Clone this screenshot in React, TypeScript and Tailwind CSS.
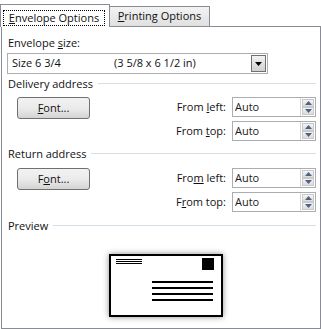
import React from "react";

const font = { fontFamily: '"Open Sans", "Noto Sans", sans-serif' };

function Spin() {
  return (
    <div className="flex h-[20px] w-[84px] border border-[#abadb3] bg-white">
      <div className="flex-1 pl-[2px] leading-[18px] text-[#1a1a1a]">Auto</div>
      <div className="flex w-[15px] flex-col border-l border-[#d5d5d5] p-[1px]">
        <div className="flex flex-1 items-center justify-center border border-[#c9c9c9] bg-gradient-to-b from-[#f4f4f4] to-[#dcdcdc]">
          <svg width="7" height="4" viewBox="0 0 7 4"><path d="M0 4 L3.5 0 L7 4Z" fill="#4d6185" /></svg>
        </div>
        <div className="flex flex-1 items-center justify-center border border-[#c9c9c9] bg-gradient-to-b from-[#f4f4f4] to-[#dcdcdc]">
          <svg width="7" height="4" viewBox="0 0 7 4"><path d="M0 0 L3.5 4 L7 0Z" fill="#4d6185" /></svg>
        </div>
      </div>
    </div>
  );
}

function FontBtn({ second }: { second?: boolean }) {
  return (
    <div className="ml-[15px] flex h-[22px] w-[73px] items-center justify-center rounded-[3px] border border-[#707070] bg-gradient-to-b from-[#f2f2f2] via-[#ebebeb] to-[#d4d4d4] text-[#111]">
      {second ? (
        <span>F<u>o</u>nt...</span>
      ) : (
        <span><u>F</u>ont...</span>
      )}
    </div>
  );
}

function Header({ children }: { children: React.ReactNode }) {
  return (
    <div className="flex h-[16px] items-center pl-[6px] pr-[4px] text-[#111]">
      <span className="leading-[16px]">{children}</span>
      <div className="ml-[5px] mt-[-1px] h-px flex-1 bg-[#d5dfe5]" />
    </div>
  );
}

function Group({ second }: { second?: boolean }) {
  return (
    <div className="flex items-start">
      <FontBtn second={second} />
      <div className="ml-auto mr-[4px] flex flex-col gap-[4px]">
        <div className="flex items-center justify-end">
          <span className="mr-[6px] text-[#111]">
            {second ? <>Fro<u>m</u> left:</> : <>From <u>l</u>eft:</>}
          </span>
          <Spin />
        </div>
        <div className="flex items-center justify-end">
          <span className="mr-[6px] text-[#111]">
            {second ? <>F<u>r</u>om top:</> : <>From <u>t</u>op:</>}
          </span>
          <Spin />
        </div>
      </div>
    </div>
  );
}

export default function App() {
  return (
    <div className="h-[329px] w-[321px] bg-white text-[11px]" style={font}>
      <div className="flex h-[26px] items-end">
        <div className="relative z-10 -mb-px flex h-[23px] w-[110px] items-start border border-b-0 border-[#898c95] bg-white pl-[2px] pt-[5px]">
          <div className="flex h-[16px] w-[102px] items-center justify-center border border-dotted border-black leading-[14px] text-[#111]">
            <span><u>E</u>nvelope Options</span>
          </div>
        </div>
        <div className="-ml-px flex h-[20px] w-[101px] items-center justify-center border border-b-0 border-[#898c95] bg-gradient-to-b from-[#f3f3f3] to-[#e0e0e0] text-[#111]">
          <span><u>P</u>rinting Options</span>
        </div>
      </div>
      <div className="ml-px flex h-[303px] w-[320px] flex-col border border-[#898c95]">
        <div className="mt-[8px] pl-[6px] leading-[16px] text-[#111]">
          Envelope <u>s</u>ize:
        </div>
        <div className="ml-[5px] mt-[2px] flex h-[21px] w-[261px] border border-[#abadb3] bg-white">
          <div className="flex flex-1 items-center pl-[4px] text-[#111]">
            <span className="w-[102px]">Size 6 3/4</span>
            <span>(3 5/8 x 6 1/2 in)</span>
          </div>
          <div className="m-[1px] flex w-[15px] items-center justify-center border border-[#707070] bg-gradient-to-b from-[#f2f2f2] to-[#d0d0d0]">
            <svg width="7" height="4" viewBox="0 0 7 4"><path d="M0 0 L3.5 4 L7 0Z" fill="#000" /></svg>
          </div>
        </div>
        <div className="mt-[2px]">
          <Header>Delivery address</Header>
        </div>
        <div className="mt-[5px]">
          <Group />
        </div>
        <div className="mt-[5px]">
          <Header>Return address</Header>
        </div>
        <div className="mt-[6px]">
          <Group second />
        </div>
        <div className="mt-[6px]">
          <Header>Preview</Header>
        </div>
        <div className="ml-[107px] mt-[20px] flex h-[63px] w-[114px] flex-col border-2 border-black bg-white shadow-[0_0_6px_rgba(0,0,0,0.45)]">
          <div className="flex justify-between px-[5px] pt-[2px]">
            <div className="flex flex-col gap-[1px] pt-[1px]">
              <div className="h-px w-[26px] bg-black" />
              <div className="h-px w-[26px] bg-black" />
              <div className="h-px w-[26px] bg-black" />
            </div>
            <div className="mr-[2px] h-[12px] w-[12px] bg-black" />
          </div>
          <div className="ml-[41px] mt-[11px] flex flex-col gap-[4px]">
            <div className="h-[2px] w-[61px] bg-black" />
            <div className="h-[2px] w-[61px] bg-black" />
            <div className="h-[2px] w-[61px] bg-black" />
            <div className="h-[2px] w-[61px] bg-black" />
          </div>
        </div>
      </div>
    </div>
  );
}
